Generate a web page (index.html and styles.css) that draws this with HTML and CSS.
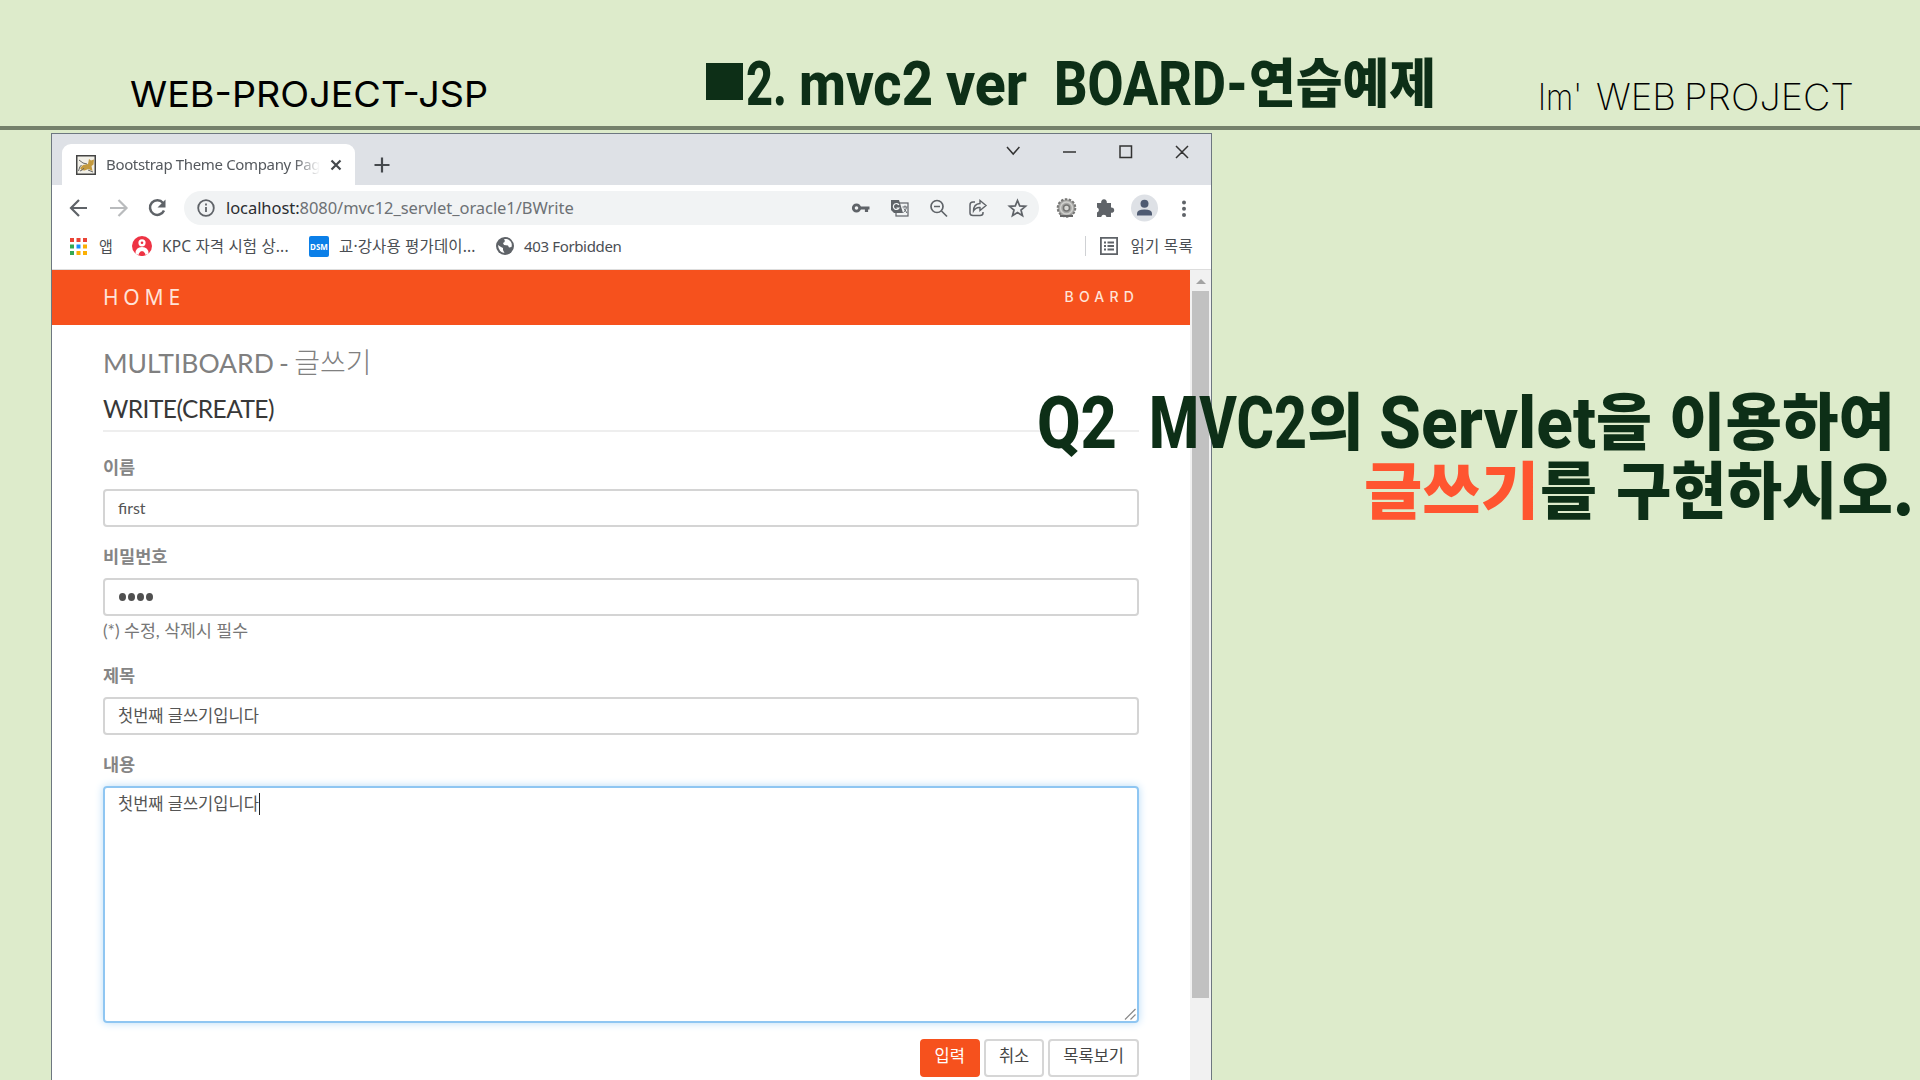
FILE: index.html
```html
<!DOCTYPE html>
<html lang="ko">
<head>
<meta charset="utf-8">
<title>MVC2 Board</title>
<link rel="stylesheet" href="styles.css">
</head>
<body>
<header class="slide-head">
  <svg class="head-text" width="1920" height="126" viewBox="0 0 1920 126">
    <text class="label" x="130" y="107" textLength="358" lengthAdjust="spacingAndGlyphs">WEB-PROJECT-JSP</text>
    <rect class="ink" x="706" y="63" width="37" height="37"/>
    <g class="title">
      <text x="746" y="105" textLength="41" lengthAdjust="spacingAndGlyphs">2.</text>
      <text x="799" y="105" textLength="134" lengthAdjust="spacingAndGlyphs">mvc2</text>
      <text x="946" y="105" textLength="81" lengthAdjust="spacingAndGlyphs">ver</text>
      <text x="1054" y="105" textLength="194" lengthAdjust="spacingAndGlyphs">BOARD-</text>
      <text class="ko" x="1249" y="103" textLength="187" lengthAdjust="spacingAndGlyphs">연습예제</text>
    </g>
    <g class="label thin">
      <text x="1538" y="109.500" textLength="44" lengthAdjust="spacingAndGlyphs">Im'</text>
      <text x="1596" y="109.500" textLength="80" lengthAdjust="spacingAndGlyphs">WEB</text>
      <text x="1684" y="109.500" textLength="170" lengthAdjust="spacingAndGlyphs">PROJECT</text>
    </g>
  </svg>
</header>

<main class="browser">
  <div class="tabstrip">
    <div class="tab">
      <svg class="favicon" width="20" height="20" viewBox="0 0 20 20"><rect x=".75" y=".75" width="18.500" height="18.500" fill="#f2f0e8" stroke="#444" stroke-width="1.500"/><path d="M4 13l3-3 5-1 1-5 2 1.500 3-1-.5 5-2 1.500 1 5-4-2-4 1.500-3-.5z" fill="#c49a3e"/><path d="M3 5l4 3 4 1M2.500 16q1-5 3-6M4 16q3-1 4-3M12 15l5 2" stroke="#666" fill="none"/></svg>
      <span class="tab-title">Bootstrap Theme Company Pag</span>
      <svg class="tab-x" width="12" height="12" viewBox="0 0 12 12"><path d="M1.500 1.500l9 9M10.500 1.500l-9 9" stroke="#45494d" stroke-width="2.200"/></svg>
    </div>
    <svg class="plus" width="16" height="16" viewBox="0 0 16 16"><path d="M8 .5v15M.5 8h15" stroke="#45494d" stroke-width="2.200"/></svg>
    <svg class="win-controls" width="190" height="20" viewBox="0 0 190 20" fill="none" stroke="#333" stroke-width="1.500"><path d="M4 5l6.200 7 6.200-7M60 10h13M117 4h11.500v11.500h-11.500zM173 4l12 12M185 4l-12 12"/></svg>
  </div>

  <div class="toolbar">
    <svg class="nav" width="100" height="24" viewBox="0 0 100 24" fill="none" stroke-width="2.200"><path d="M18 12H2M10 4l-8 8 8 8" stroke="#5f6368"/><path d="M41 12h16M49.500 4l8 8-8 8" stroke="#b9bbbd"/><path d="M94 7A7.300 7.300 0 1 0 95 14.500" stroke="#5f6368" stroke-width="2.500"/><path d="M96.500 3.500v8h-8z" fill="#5f6368"/></svg>
    <div class="omnibox">
      <svg width="18" height="18" viewBox="0 0 18 18" fill="none" stroke="#5f6368" stroke-width="1.800"><circle cx="9" cy="9" r="7.800"/><path d="M9 8v5M9 4.500v2"/></svg>
      <span class="url"><b>localhost:</b>8080/mvc12_servlet_oracle1/BWrite</span>
      <svg class="box-icons" width="176" height="24" viewBox="0 0 176 24" fill="none" stroke="#5f6368" stroke-width="1.700">
        <circle cx="4.500" cy="12" r="3.200" stroke-width="2.800"/><path d="M8 12h9.500M14.500 12v4" stroke-width="3.200"/>
        <rect x="44" y="7" width="12" height="13" stroke-width="1.200"/><path d="M39 4h8l4 13h-9l-3-3z" fill="#5f6368" stroke="none"/><path d="M47 9a3 3 0 1 0 0 3h-2.500" stroke="#f1f3f4" stroke-width="1.200"/><path d="M50.500 11h5M53 9.500v1.500M54.500 11.500c-1 3-2 4-3 5M52 12.500l3 4.500" stroke-width="1"/>
        <circle cx="85" cy="10.500" r="6"/><path d="M89.500 15l5.500 5.500M82 10.500h6"/>
        <path d="M123 6h-2q-3 0-3 3v8q0 2.500 3 2.500h7q3 0 3-2.500v-1" stroke-width="1.500"/><path d="M128 4.500l6 5-6 5v-3q-4-.5-6.500 3.500 0-7 6.500-7.500z" stroke-width="1.400"/>
        <path d="M165.500 4.500l2.200 5.400 5.800.4-4.500 3.700 1.500 5.700-5-3.200-5 3.200 1.500-5.700-4.500-3.700 5.800-.4z"/>
      </svg>
    </div>
    <svg class="ext-icons" width="150" height="28" viewBox="0 0 150 28">
      <circle cx="15.500" cy="14" r="8.800" fill="#a7a7a5" stroke="#777775" stroke-width="2" stroke-dasharray="2.500 1.450"/><circle cx="15.500" cy="14" r="6" fill="none" stroke="#d0d0cd" stroke-width="1.500"/><circle cx="15.500" cy="14" r="3" fill="#d8d8d5" stroke="#747472" stroke-width="1.500"/><path d="M9 22h13" stroke="#666" stroke-width="2"/>
      <path d="M46 9h4.200a2.900 2.900 0 1 1 5.600 0H60v4.500a2.700 2.700 0 1 1 0 5.300V23h-4.500a2.700 2.700 0 0 0-5.300 0H46v-4.500a2.600 2.600 0 0 0 0-5z" fill="#5f6368"/>
      <circle cx="93.500" cy="14" r="13.500" fill="#dee1e6"/><circle cx="93.500" cy="9.800" r="4" fill="#4f5b72"/><path d="M86 21.500v-2q0-4 7.500-4t7.500 4v2z" fill="#4f5b72"/>
      <g fill="#5f6368"><circle cx="133" cy="8.500" r="2"/><circle cx="133" cy="14.700" r="2"/><circle cx="133" cy="21" r="2"/></g>
    </svg>
  </div>

  <div class="bookmarks">
    <svg class="apps" width="17" height="17" viewBox="0 0 17 17"><path d="M0 0h4v4H0zM6.500 0h4v4h-4zM13 0h4v4h-4z" fill="#ea4335"/><path d="M0 6.500h4v4H0zM0 13h4v4H0z" fill="#34a853"/><path d="M6.500 6.500h4v4h-4z" fill="#1a8cff"/><path d="M13 6.500h4v4h-4zM6.500 13h4v4h-4zM13 13h4v4h-4z" fill="#fbb004"/></svg>
    <span class="bm b1">앱</span>
    <svg class="kpc" width="20" height="20" viewBox="0 0 20 20"><circle cx="10" cy="10" r="10" fill="#ee3344"/><circle cx="10" cy="6.800" r="3.600" fill="#fff"/><circle cx="10" cy="6.800" r="1.300" fill="#ee3344"/><path d="M3.500 17.500q0-6.500 6.500-6.500t6.500 6.500l-3 1.500q-.5-3.500-3.500-3.500t-3.500 3.500z" fill="#fff"/><circle cx="10" cy="17.600" r="2.300" fill="#ee3344"/></svg>
    <span class="bm b2">KPC 자격 시험 상...</span>
    <span class="dsm">DSM</span>
    <span class="bm b3">교·강사용 평가데이...</span>
    <svg class="globe" width="18" height="18" viewBox="0 0 18 18"><circle cx="9" cy="9" r="9" fill="#5f6368"/><path d="M2 8l3 2 2 1v2l1.500 3Q2.500 15 2 8zM8 2q2 3-1 4l1 2 4 .5 1 2 2.500-.5Q17 4 11 2z" fill="#fff"/></svg>
    <span class="bm b4">403 Forbidden</span>
    <span class="divider"></span>
    <svg class="list" width="18" height="18" viewBox="0 0 18 18" fill="none" stroke="#5f6368" stroke-width="1.800"><path d="M.9.9h16.200v16.200H.9zM4 5.500h2M4 9h2M4 12.500h2M7.500 5.500H14M7.500 9H14M7.500 12.500H14"/></svg>
    <span class="bm b5">읽기 목록</span>
  </div>

  <div class="viewport">
    <div class="page">
      <nav class="navbar"><span class="brand">HOME</span><span class="menu">BOARD</span></nav>
      <div class="content">
        <h1>MULTIBOARD - <span class="ko">글쓰기</span></h1>
        <h2>WRITE(CREATE)</h2>
        <form>
          <div class="group"><label>이름</label><div class="field">first</div></div>
          <div class="group pw"><label>비밀번호</label><div class="field"><i class="dot"></i><i class="dot"></i><i class="dot"></i><i class="dot"></i></div><span class="help">(*) 수정, 삭제시 필수</span></div>
          <div class="group"><label>제목</label><div class="field ko-text">첫번째 글쓰기입니다</div></div>
          <div class="group body"><label>내용</label><div class="field area ko-text"><span class="typed">첫번째 글쓰기입니다</span><svg class="grip" width="12" height="12" viewBox="0 0 12 12"><path d="M1 11.500L11.500 1M6.500 11.500l5-5" stroke="#888" stroke-width="1.200"/></svg></div></div>
          <div class="buttons"><span class="btn primary">입력</span><span class="btn">취소</span><span class="btn">목록보기</span></div>
        </form>
      </div>
    </div>
    <div class="scrollbar"><i class="up"></i><i class="thumb"></i></div>
  </div>
</main>

<svg class="question title" width="900" height="170" viewBox="1020 370 900 170">
  <g class="big">
    <text x="1037" y="448" textLength="80" lengthAdjust="spacingAndGlyphs">Q2</text>
    <text x="1149" y="448" textLength="158" lengthAdjust="spacingAndGlyphs">MVC2</text>
    <text class="ko" x="1307" y="445" textLength="57" lengthAdjust="spacingAndGlyphs">의</text>
    <text x="1379" y="448" textLength="217" lengthAdjust="spacingAndGlyphs">Servlet</text>
    <text class="ko" x="1596" y="445" textLength="56" lengthAdjust="spacingAndGlyphs">을</text>
    <text class="ko" x="1669" y="445" textLength="226" lengthAdjust="spacingAndGlyphs">이용하여</text>
    <text class="ko accent" x="1364" y="514" textLength="175" lengthAdjust="spacingAndGlyphs">글쓰기</text>
    <text class="ko" x="1540" y="514" textLength="57" lengthAdjust="spacingAndGlyphs">를</text>
    <text class="ko" x="1616" y="514" textLength="298" lengthAdjust="spacingAndGlyphs">구현하시오.</text>
  </g>
</svg>
</body>
</html>
```

FILE: styles.css
```css
* { box-sizing: border-box; }
body {
  margin: 0;
  width: 1920px;
  height: 1080px;
  overflow: hidden;
  position: relative;
  background: #ddebcb;
  font-family: "Noto Sans", "Noto Sans CJK KR", sans-serif;
}
svg { display: block; flex: none; overflow: visible; }

.slide-head { height: 130px; border-bottom: 4px solid #74806b; }
.label { font: 400 36px Inter, sans-serif; fill: #000; }
.thin { font-weight: 250; }
.title { font-family: Roboto, "Noto Sans CJK KR", sans-serif; font-weight: 800; font-size: 61px; fill: #0d2f17; }
.title .ko { font-family: "Noto Sans CJK KR", sans-serif; font-weight: 900; font-size: 53px; }
.ink { fill: #0d2f17; }
.question { position: absolute; left: 1020px; top: 370px; }
.big { font-size: 73px; }
.title .big .ko { font-size: 62px; }
.big .accent { fill: #ff5530; }

.browser {
  width: 1161px;
  height: 960px;
  margin: 3px 0 0 51px;
  border: 1px solid #6d7780;
  background: #fff;
}
.tabstrip { display: flex; height: 51px; background: #dee1e6; }
.tab {
  display: flex;
  align-items: center;
  width: 293px;
  height: 41px;
  margin: 10px 0 0 10px;
  padding: 0 13px 0 14px;
  background: #fff;
  border-radius: 9px 9px 0 0;
}
.tab-title {
  width: 214px;
  margin-left: 10px;
  white-space: nowrap;
  font-size: 15px;
  letter-spacing: -.35px;
  line-height: 22px;
  margin-top: -2px;
  color: #55595e;
  -webkit-mask-image: linear-gradient(90deg, #000 88%, transparent);
  mask-image: linear-gradient(90deg, #000 88%, transparent);
}
.tab-x { margin-left: 10px; }
.plus { margin: 23px 0 0 19px; }
.win-controls { margin: 8px 18px 0 auto; }

.toolbar { display: flex; align-items: center; height: 46px; }
.nav { margin-left: 17px; }
.omnibox {
  display: flex;
  align-items: center;
  width: 855px;
  height: 34px;
  margin-left: 15px;
  padding-left: 13px;
  border-radius: 17px;
  background: #f1f3f4;
}
.url { margin: -2px 0 0 11px; font-size: 16.500px; letter-spacing: -.06px; color: #6d7175; white-space: nowrap; }
.url b { font-weight: 400; color: #2b2d30; }
.box-icons { margin-left: auto; margin-right: 11px; }
.ext-icons { margin-left: 12px; }

.bookmarks { display: flex; align-items: center; height: 39px; padding: 0 18px 8px 18px; border-bottom: 1px solid #ddd; }
.bm { font-size: 15px; color: #4a4e53; white-space: nowrap; line-height: 22px; }
.b1 { width: 33px; margin-left: 12px; }
.b2 { width: 147px; margin-left: 10px; font-size: 15.500px; letter-spacing: .15px; }
.dsm { width: 20px; height: 21px; border-radius: 2px; background: #0b7fe8; color: #fff; font: 700 8px/21px "Noto Sans", sans-serif; text-align: center; }
.b3 { width: 157px; margin-left: 10px; font-size: 15.500px; letter-spacing: .15px; }
.b4 { margin-left: 10px; letter-spacing: -.35px; }
.divider { width: 1px; height: 20px; margin-left: auto; background: #cfd1d4; }
.list { margin-left: 14px; }
.b5 { margin-left: 12px; font-size: 15.500px; letter-spacing: .3px; }

.viewport { display: flex; height: 822px; }
.page { width: 1138px; }
.navbar {
  display: flex;
  justify-content: space-between;
  align-items: center;
  height: 55px;
  padding: 0 49px 0 51px;
  background: #f6511d;
  color: #ffe3d8;
}
.brand { font-size: 21px; letter-spacing: 4.800px; margin-top: -2px; }
.menu { font: 500 14px Inter, sans-serif; letter-spacing: 5.200px; margin: -2px 2px 0 0; }
.content { padding: 17px 51px 0 51px; font-family: Lato, "Noto Sans CJK KR", sans-serif; color: #777; }
h1, h2 { font-weight: 400; margin: 0; white-space: nowrap; }
h1 { font-size: 26.500px; word-spacing: -1.500px; line-height: 40px; color: #808080; }
h1 .ko { font-weight: 300; font-size: 28px; }
h2 { font-size: 24.500px; letter-spacing: -.55px; line-height: 40px; height: 48px; margin-top: 1px; padding-top: 5px; border-bottom: 2px solid #eee; color: #383838; }
.group { margin-top: 21px; height: 68px; }
.group.pw { height: 98px; }
.group.body { height: auto; }
h2 + form .group:first-child { margin-top: 25px; }
label { display: block; height: 32px; line-height: 22px; font-size: 17.500px; font-weight: 700; color: #858585; }
.field {
  display: flex;
  align-items: center;
  height: 38px;
  padding: 0 13px 2px;
  border: 2px solid #d4d4d4;
  border-radius: 4px;
  font-size: 16px;
  color: #555;
}
.ko-text { font-size: 16.500px; }
.dot { width: 7px; height: 8px; margin: 2px 2px 0 0; border-radius: 50%; background: #505050; }
.dot:first-child { margin-left: 1px; }
.help { display: block; line-height: 30px; font-size: 17.300px; }
.area { height: 237px; align-items: flex-start; padding: 5px 0 0 13px; border-color: #8fc6f2; box-shadow: 0 0 9px #b9dcf7; position: relative; }
.typed { border-right: 1px solid #222; line-height: 22px; }
.grip { position: absolute; right: 1px; bottom: 1px; }
.buttons { display: flex; justify-content: flex-end; gap: 4px; margin-top: 16px; }
.btn { height: 38px; padding: 0 13px; border: 2px solid #d6d6d6; border-radius: 4px; font-size: 16.500px; line-height: 31px; color: #444; }
.primary { background: #f6511d; border-color: #f6511d; color: #fff; }

.scrollbar { flex: 1; background: #f1f1f1; }
.up { display: block; width: 0; height: 0; margin: 9px auto 7px; border: 5px solid transparent; border-top: 0; border-bottom-color: #a3a3a3; }
.thumb { display: block; width: 17px; height: 707px; margin: 0 auto; background: #c1c1c1; }
```
